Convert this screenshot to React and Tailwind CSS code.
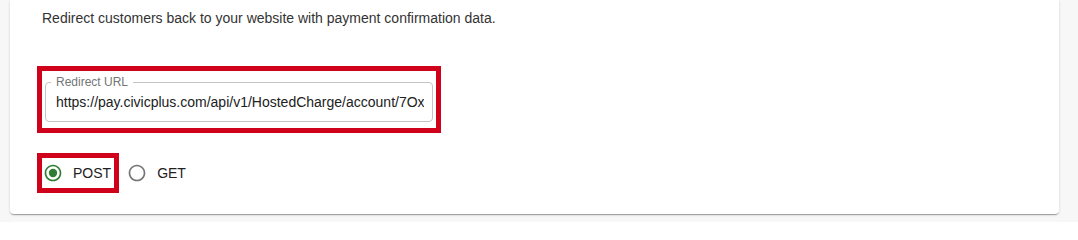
import React, { useState } from "react";

const RadioIcon = ({ checked }) => (
  <svg viewBox="0 0 24 24" className="h-5 w-5 shrink-0">
    <path
      fill={checked ? "#2e7d32" : "#757575"}
      d="M12 2C6.48 2 2 6.48 2 12s4.48 10 10 10 10-4.48 10-10S17.52 2 12 2zm0 18c-4.42 0-8-3.58-8-8s3.58-8 8-8 8 3.58 8 8-3.58 8-8 8z"
    />
    {checked && <circle cx="12" cy="12" r="5" fill="#2e7d32" />}
  </svg>
);

const App = () => {
  const [method, setMethod] = useState("POST");

  return (
    <div
      className="min-h-[222px] w-[1078px] bg-[#f7f7f7] text-[#212121]"
      style={{ fontFamily: '"Liberation Sans", Arial, sans-serif' }}
    >
      {/* Card */}
      <div className="ml-[10px] w-[1049px] rounded-b bg-white pl-[32px] pt-[8px] pb-[21px] shadow-[0_2px_1px_-1px_rgba(0,0,0,0.2),0_1px_1px_0_rgba(0,0,0,0.14),0_1px_3px_0_rgba(0,0,0,0.12)]">
        <p className="text-[14px] leading-[20px] text-[#333]">
          Redirect customers back to your website with payment confirmation data.
        </p>

        {/* Redirect URL field (highlighted) */}
        <div className="-ml-[5px] mt-[38px] w-[404px] border-[5px] border-[#d0021b] pt-[11px] pr-[3px] pb-[6px] pl-[3px]">
          <div className="relative h-[40px] w-[388px] rounded border border-[#c4c4c4]">
            <span className="absolute -top-[7px] left-[5px] bg-white px-[5px] text-[12px] leading-[12px] text-[#757575]">
              Redirect URL
            </span>
            <input
              type="text"
              readOnly
              value="https://pay.civicplus.com/api/v1/HostedCharge/account/7Ox"
              className="h-full w-full bg-transparent pl-[10px] pr-[8px] text-[14px] text-[#212121] outline-none"
              style={{ fontFamily: '"Liberation Sans", Arial, sans-serif' }}
            />
          </div>
        </div>

        {/* Method radios */}
        <div className="mt-[20px] flex items-center">
          <div className="-ml-[5px] border-[5px] border-[#d0021b] pl-[1px] pr-[3px]">
            <label
              className="flex h-[30px] cursor-pointer items-center gap-[10px]"
              onClick={() => setMethod("POST")}
            >
              <RadioIcon checked={method === "POST"} />
              <span className="text-[14px] leading-[20px]">POST</span>
            </label>
          </div>
          <label
            className="ml-[8px] flex h-[30px] cursor-pointer items-center gap-[10px]"
            onClick={() => setMethod("GET")}
          >
            <RadioIcon checked={method === "GET"} />
            <span className="text-[14px] leading-[20px]">GET</span>
          </label>
        </div>
      </div>
    </div>
  );
};

export default App;
